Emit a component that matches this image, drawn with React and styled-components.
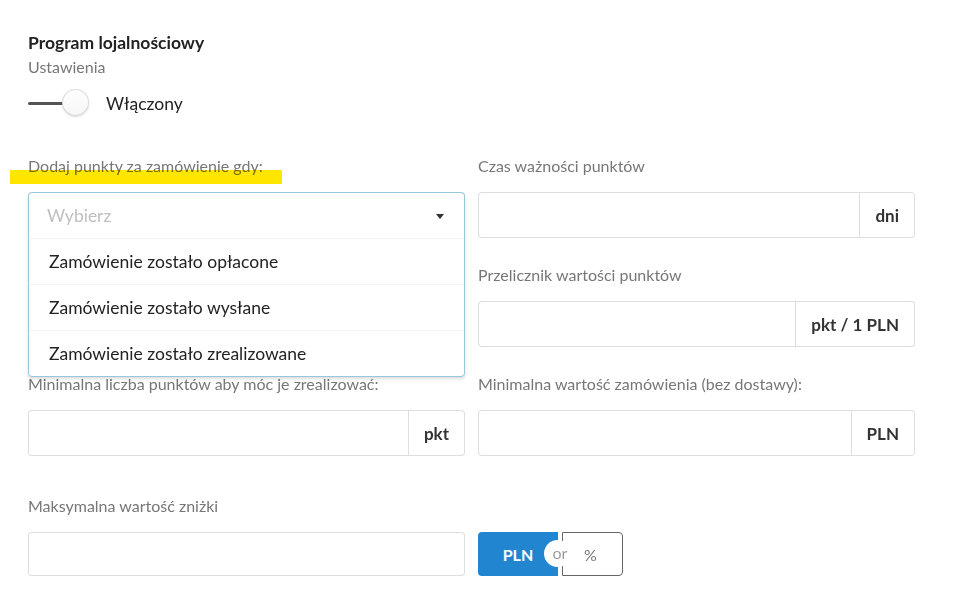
import styled, { createGlobalStyle } from "styled-components";

const GlobalStyle = createGlobalStyle`
    html, body {
        margin: 0;
        padding: 0;
        background: #fff;
        font-family: Lato, "Open Sans", sans-serif;
        color: #222;
    }
    * { box-sizing: border-box; }
`;

const Page = styled.div`
    width: 962px;
    height: 598px;
    padding: 33px 0 0 28px;
    overflow: hidden;
`;

const Title = styled.div`
    font-size: 17.5px;
    font-weight: 700;
    line-height: 20px;
    color: #222;
`;

const Subtitle = styled.div`
    font-size: 16px;
    line-height: 20px;
    color: #777;
    margin-top: 4px;
`;

const ToggleRow = styled.div`
    display: flex;
    align-items: center;
    height: 28px;
    margin-top: 12px;
`;

const Track = styled.div`
    position: relative;
    width: 62px;
    height: 28px;
    display: flex;
    align-items: center;

    &::before {
        content: "";
        display: block;
        width: 40px;
        height: 3px;
        border-radius: 2px;
        background: #545454;
    }
`;

const Knob = styled.span`
    position: absolute;
    left: 34px;
    top: 0;
    width: 27px;
    height: 27px;
    border-radius: 50%;
    background: linear-gradient(#fff, #f6f6f6);
    box-shadow: 0 1px 2px 0 rgba(34, 36, 38, 0.15), 0 0 0 1px rgba(34, 36, 38, 0.15) inset;
`;

const ToggleLabel = styled.span`
    margin-left: 16px;
    font-size: 17.5px;
    color: #222;
`;

const Grid = styled.div`
    display: grid;
    grid-template-columns: 437px 437px;
    column-gap: 13px;
    row-gap: 27px;
    margin-top: ${(p) => p.$top}px;
`;

const Field = styled.div`
    position: relative;
    display: flex;
    flex-direction: column;
    gap: 16px;
`;

const Label = styled.label`
    position: relative;
    font-size: 16px;
    line-height: 20px;
    color: #777;
    font-weight: 400;
    white-space: nowrap;
`;

const Marker = styled.span`
    position: absolute;
    left: -18px;
    top: 14px;
    width: 272px;
    height: 14px;
    background: #ffe600;
    mix-blend-mode: multiply;
`;

const InputBox = styled.div`
    display: flex;
    height: ${(p) => p.$h || 46}px;
    border: 1px solid rgba(34, 36, 38, 0.15);
    border-radius: 4px;
    background: #fff;
    overflow: hidden;
`;

const TextInput = styled.input`
    flex: 1;
    min-width: 0;
    border: none;
    outline: none;
    padding: 0 14px;
    font: inherit;
    font-size: 17px;
    background: transparent;
`;

const Unit = styled.div`
    display: flex;
    align-items: center;
    padding: 0 15px;
    border-left: 1px solid rgba(34, 36, 38, 0.15);
    font-size: 17px;
    font-weight: 700;
    color: #333;
    white-space: nowrap;
`;

const Dropdown = styled.div`
    position: absolute;
    left: 0;
    right: 0;
    top: 36px;
    z-index: 5;
    background: #fff;
    border: 1px solid #96c8da;
    border-radius: 4px;
    box-shadow: 0 2px 3px 0 rgba(34, 36, 38, 0.15);
`;

const DropdownHead = styled.div`
    display: flex;
    align-items: center;
    justify-content: space-between;
    height: 45px;
    padding: 0 20px 0 18px;
    font-size: 17.5px;
    color: #bfbfbf;
`;

const Caret = styled.span`
    width: 0;
    height: 0;
    border-left: 4.5px solid transparent;
    border-right: 4.5px solid transparent;
    border-top: 5px solid #333;
    margin-top: 1px;
`;

const Item = styled.div`
    display: flex;
    align-items: center;
    height: 46px;
    padding: 0 20px;
    border-top: 1px solid #f3f3f3;
    font-size: 17.5px;
    color: #222;
`;

const ButtonGroup = styled.div`
    display: flex;
    align-self: flex-start;
    height: 44px;
`;

const Choice = styled.button`
    position: relative;
    height: 44px;
    width: ${(p) => p.$w}px;
    margin: 0;
    font-family: inherit;
    font-size: 16px;
    cursor: pointer;
    ${(p) =>
        p.$active
            ? `
        background: #2185d0;
        color: #fff;
        font-weight: 700;
        border: none;
        border-radius: 4px 0 0 4px;
        padding-right: 6px;
    `
            : `
        background: #fff;
        color: #777;
        font-weight: 400;
        border: 1px solid #666;
        border-radius: 0 4px 4px 0;
        margin-left: 4px;
        padding-left: 2px;
    `}
`;

const Or = styled.span`
    position: absolute;
    right: -13px;
    top: 8px;
    z-index: 3;
    width: 27px;
    height: 27px;
    border-radius: 50%;
    background: #fff;
    color: rgba(0, 0, 0, 0.4);
    font-size: 16px;
    font-weight: 400;
    line-height: 26px;
    text-align: center;
    padding-left: 5px;
`;

const UnitField = ({ label, unit }) => (
    <Field>
        <Label>{label}</Label>
        <InputBox>
            <TextInput />
            <Unit>{unit}</Unit>
        </InputBox>
    </Field>
);

const options = [
    "Zamówienie zostało opłacone",
    "Zamówienie zostało wysłane",
    "Zamówienie zostało zrealizowane",
];

export default function App() {
    return (
        <Page>
            <GlobalStyle />
            <Title>Program lojalnościowy</Title>
            <Subtitle>Ustawienia</Subtitle>
            <ToggleRow>
                <Track>
                    <Knob />
                </Track>
                <ToggleLabel>Włączony</ToggleLabel>
            </ToggleRow>

            <Grid $top={39}>
                <Field>
                    <Label>
                        <Marker />
                        Dodaj punkty za zamówienie gdy:
                    </Label>
                    <InputBox />
                    <Dropdown>
                        <DropdownHead>
                            Wybierz
                            <Caret />
                        </DropdownHead>
                        {options.map((o) => (
                            <Item key={o}>{o}</Item>
                        ))}
                    </Dropdown>
                </Field>
                <UnitField label="Czas ważności punktów" unit="dni" />

                <div />
                <UnitField label="Przelicznik wartości punktów" unit="pkt / 1 PLN" />

                <UnitField label="Minimalna liczba punktów aby móc je zrealizować:" unit="pkt" />
                <UnitField label="Minimalna wartość zamówienia (bez dostawy):" unit="PLN" />
            </Grid>

            <Grid $top={40}>
                <Field>
                    <Label>Maksymalna wartość zniżki</Label>
                    <InputBox $h={44}>
                        <TextInput />
                    </InputBox>
                </Field>
                <Field>
                    <Label>&nbsp;</Label>
                    <ButtonGroup>
                        <Choice $active $w={80}>
                            PLN
                            <Or>or</Or>
                        </Choice>
                        <Choice $w={61}>%</Choice>
                    </ButtonGroup>
                </Field>
            </Grid>
        </Page>
    );
}
